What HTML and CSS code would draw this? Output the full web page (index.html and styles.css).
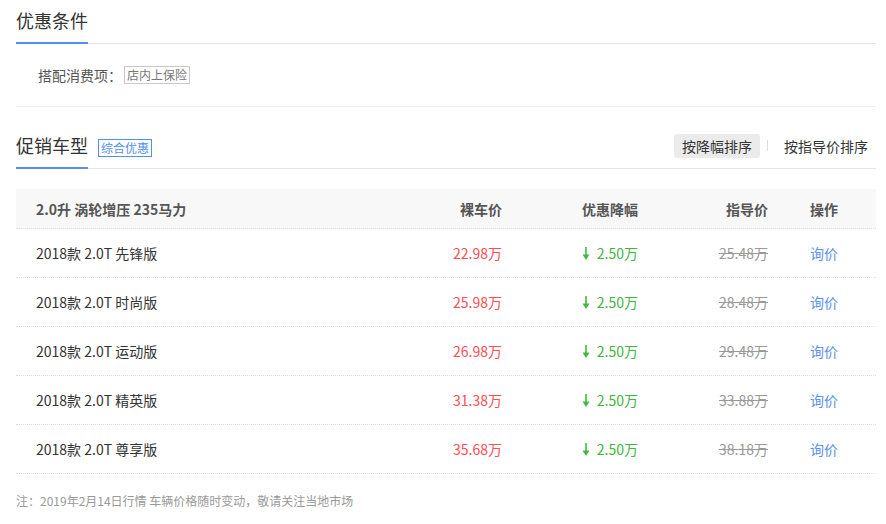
FILE: index.html
```html
<!DOCTYPE html>
<html lang="zh-CN">
<head>
<meta charset="utf-8">
<title>优惠条件</title>
<link rel="stylesheet" href="styles.css">
</head>
<body>
<div class="page">
  <div class="sec-head">
    <h2 class="sec-title">优惠条件</h2>
  </div>
  <div class="cond">
    <span class="cond-label">搭配消费项：</span><span class="cond-box">店内上保险</span>
  </div>

  <div class="sec-head sec-head-2">
    <h2 class="sec-title">促销车型</h2>
    <span class="tag">综合优惠</span>
    <div class="sorts">
      <span class="sort active">按降幅排序</span>
      <span class="sep"></span>
      <span class="sort">按指导价排序</span>
    </div>
  </div>

  <div class="table">
    <div class="row head">
      <div class="c-name">2.0升 涡轮增压 235马力</div>
      <div class="c-price">裸车价</div>
      <div class="c-disc">优惠降幅</div>
      <div class="c-guide">指导价</div>
      <div class="c-op">操作</div>
    </div>
    <div class="row">
      <div class="c-name">2018款 2.0T 先锋版</div>
      <div class="c-price red">22.98万</div>
      <div class="c-disc green"><svg class="arr" width="8" height="13" viewBox="0 0 8 13"><path d="M4 0v9" stroke="#43b843" stroke-width="1.6"/><path d="M0.5 7.5h7L4 13z" fill="#43b843"/></svg>2.50万</div>
      <div class="c-guide"><s>25.48万</s></div>
      <div class="c-op"><a class="ask">询价</a></div>
    </div>
    <div class="row">
      <div class="c-name">2018款 2.0T 时尚版</div>
      <div class="c-price red">25.98万</div>
      <div class="c-disc green"><svg class="arr" width="8" height="13" viewBox="0 0 8 13"><path d="M4 0v9" stroke="#43b843" stroke-width="1.6"/><path d="M0.5 7.5h7L4 13z" fill="#43b843"/></svg>2.50万</div>
      <div class="c-guide"><s>28.48万</s></div>
      <div class="c-op"><a class="ask">询价</a></div>
    </div>
    <div class="row">
      <div class="c-name">2018款 2.0T 运动版</div>
      <div class="c-price red">26.98万</div>
      <div class="c-disc green"><svg class="arr" width="8" height="13" viewBox="0 0 8 13"><path d="M4 0v9" stroke="#43b843" stroke-width="1.6"/><path d="M0.5 7.5h7L4 13z" fill="#43b843"/></svg>2.50万</div>
      <div class="c-guide"><s>29.48万</s></div>
      <div class="c-op"><a class="ask">询价</a></div>
    </div>
    <div class="row">
      <div class="c-name">2018款 2.0T 精英版</div>
      <div class="c-price red">31.38万</div>
      <div class="c-disc green"><svg class="arr" width="8" height="13" viewBox="0 0 8 13"><path d="M4 0v9" stroke="#43b843" stroke-width="1.6"/><path d="M0.5 7.5h7L4 13z" fill="#43b843"/></svg>2.50万</div>
      <div class="c-guide"><s>33.88万</s></div>
      <div class="c-op"><a class="ask">询价</a></div>
    </div>
    <div class="row">
      <div class="c-name">2018款 2.0T 尊享版</div>
      <div class="c-price red">35.68万</div>
      <div class="c-disc green"><svg class="arr" width="8" height="13" viewBox="0 0 8 13"><path d="M4 0v9" stroke="#43b843" stroke-width="1.6"/><path d="M0.5 7.5h7L4 13z" fill="#43b843"/></svg>2.50万</div>
      <div class="c-guide"><s>38.18万</s></div>
      <div class="c-op"><a class="ask">询价</a></div>
    </div>
  </div>

  <p class="note">注：2019年2月14日行情 车辆价格随时变动，敬请关注当地市场</p>
</div>
</body>
</html>
```

FILE: styles.css
```css
* { box-sizing: border-box; }
html, body { margin: 0; padding: 0; background: #fff; }
body {
  font-family: "Noto Sans CJK SC", "Noto Sans", sans-serif;
  color: #333;
  font-size: 14px;
}
.page {
  margin: 0 10px 0 16px;
}
.sec-head {
  display: flex;
  align-items: center;
  height: 44px;
  border-bottom: 1px solid #e5e5e5;
}
.sec-head-2 {
  margin-top: 18px;
}
.sec-title {
  margin: 0 0 -1px 0;
  align-self: flex-end;
  font-size: 18px;
  font-weight: normal;
  line-height: 42px;
  height: 45px;
  color: #333;
  border-bottom: 2px solid #4f8ff3;
}
.tag {
  margin-left: 10px;
  margin-top: 2px;
  font-size: 12px;
  line-height: 16px;
  padding: 0 2px;
  color: #4f8ff3;
  border: 1px solid #4f8ff3;
}
.sorts {
  margin-left: auto;
  display: flex;
  align-items: center;
  margin-top: -2px;
}
.sort {
  font-size: 14px;
  line-height: 24px;
  padding: 0 8px;
  border-radius: 3px;
  color: #333;
}
.sort.active {
  background: #ebebeb;
}
.sep {
  width: 1px;
  height: 11px;
  background: #ddd;
  margin: 0 8px 0 7px;
}
.cond {
  padding: 21px 22px;
  line-height: 20px;
  border-bottom: 1px solid #eee;
  display: flex;
  align-items: center;
}
.cond-label {
  color: #555;
  font-size: 14px;
}
.cond-box {
  margin-left: 2px;
  font-size: 12px;
  line-height: 16px;
  padding: 0 2px;
  border: 1px solid #c8c8c8;
  color: #777;
}
.table {
  margin-top: 20px;
}
.row {
  display: grid;
  grid-template-columns: 1fr 120px 136px 130px 108px;
  align-items: center;
  height: 49px;
  border-bottom: 1px dotted #e0e0e0;
}
.row.head {
  height: 40px;
  background: #f8f8f8;
  font-weight: bold;
  color: #555;
}
.c-name { padding-left: 20px; }
.c-price, .c-disc, .c-guide { text-align: right; }
.c-op { padding-left: 42px; }
.red { color: #ff4d55; }
.green { color: #3eb53e; }
.arr { vertical-align: -1px; margin-right: 7px; }
.c-guide s { color: #999; text-decoration: line-through; }
.row.head .c-guide { color: #555; }
.ask { color: #5d8ff2; cursor: pointer; }
.note {
  margin: 19px 0 0 0;
  font-size: 12px;
  line-height: 16px;
  color: #999;
}
```
